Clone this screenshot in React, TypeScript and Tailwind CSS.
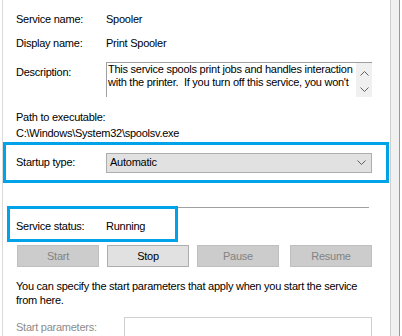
// Service properties dialog — General tab (Print Spooler)
const font = { fontFamily: '"Liberation Sans", Arial, sans-serif' };

function Chevron({ up = false, className = "" }: { up?: boolean; className?: string }) {
    return (
        <svg width="9" height="5" viewBox="0 0 9 5" className={className}>
            <path
                d={up ? "M0.5 4.5 L4.5 0.5 L8.5 4.5" : "M0.5 0.5 L4.5 4.5 L8.5 0.5"}
                fill="none"
                stroke="#5f5f5f"
                strokeWidth="1"
            />
        </svg>
    );
}

function Btn({ label, enabled = false, className = "" }: { label: string; enabled?: boolean; className?: string }) {
    return (
        <div
            className={
                "w-[82px] h-[22px] flex items-center justify-center border text-[11px] " +
                (enabled
                    ? "bg-[#e1e1e1] border-[#adadad] text-black"
                    : "bg-[#cccccc] border-[#bfbfbf] text-[#838383]") +
                " " +
                className
            }
        >
            {label}
        </div>
    );
}

export default function App() {
    return (
        <div className="w-[402px] h-[336px] overflow-hidden flex bg-white text-black text-[11px] leading-[13px] tracking-[-0.25px]" style={font}>
            {/* left edge */}
            <div className="w-[2px] shrink-0" />
            <div className="w-px shrink-0 bg-[#dadada]" />

            {/* Panel */}
            <div className="w-[387px] shrink-0">
                <div className="mt-[13px] h-[13px] flex pl-[13px]">
                    <span className="w-[90px]">Service name:</span>
                    <span>Spooler</span>
                </div>
                <div className="mt-[11px] h-[13px] flex pl-[13px]">
                    <span className="w-[90px]">Display name:</span>
                    <span>Print Spooler</span>
                </div>

                {/* Description */}
                <div className="mt-[12px] flex pl-[13px]">
                    <span className="w-[90px] pt-[4px]">Description:</span>
                    <div className="w-[266px] h-[35px] flex border-t border-l border-[#a0a0a0]">
                        <div className="flex-1 pl-[1px] whitespace-nowrap overflow-hidden">
                            <div>This service spools print jobs and handles interaction</div>
                            <div>with the printer.&nbsp; If you turn off this service, you won't</div>
                        </div>
                        <div className="w-[16px] bg-[#f0f0f0] flex flex-col items-center pt-[8px] gap-[11px]">
                            <Chevron up />
                            <Chevron />
                        </div>
                    </div>
                </div>

                <div className="mt-[14px] h-[13px] pl-[13px]">Path to executable:</div>
                <div className="mt-[3px] h-[13px] pl-[13px]">C:\Windows\System32\spoolsv.exe</div>

                {/* Startup type (highlighted) */}
                <div className="mt-[2px] w-[386px] h-[41px] border-[3px] border-[#00a2e8] flex items-center pl-[10px]">
                    <span className="w-[90px]">Startup type:</span>
                    <div className="w-[266px] h-[20px] bg-[#e1e1e1] border border-[#adadad] flex items-center justify-between pl-[3px] pr-[5px]">
                        <span>Automatic</span>
                        <Chevron />
                    </div>
                </div>

                {/* Separator + status (highlighted) */}
                <div className="mt-[24px] ml-[13px] w-[353px] h-px bg-[#a0a0a0]" />
                <div className="-mt-[2px] ml-[4px] w-[171px] h-[36px] border-[3px] border-[#00a2e8] bg-white flex pl-[6px] pt-[11px]">
                    <span className="w-[90px]">Service status:</span>
                    <span>Running</span>
                </div>

                {/* Buttons */}
                <div className="mt-[3px] flex pl-[14px]">
                    <Btn label="Start" />
                    <Btn label="Stop" enabled className="ml-[8px]" />
                    <Btn label="Pause" className="ml-[8px]" />
                    <Btn label="Resume" className="ml-[11px]" />
                </div>

                <div className="mt-[12px] pl-[13px] pr-[16px] leading-[14px]">
                    You can specify the start parameters that apply when you start the service from here.
                </div>

                <div className="mt-[10px] flex pl-[13px]">
                    <span className="w-[108px] pt-[4px] text-[#8c8c8c]">Start parameters:</span>
                    <div className="w-[248px] h-[24px] border border-[#d0d0d0] bg-white" />
                </div>
            </div>

            {/* right edge */}
            <div className="w-px shrink-0 bg-[#cfcfcf]" />
            <div className="w-[8px] shrink-0 bg-[#f0f0f0]" />
            <div className="w-px shrink-0 bg-[#8f8fdc]" />
            <div className="w-[2px] shrink-0" />
        </div>
    );
}
